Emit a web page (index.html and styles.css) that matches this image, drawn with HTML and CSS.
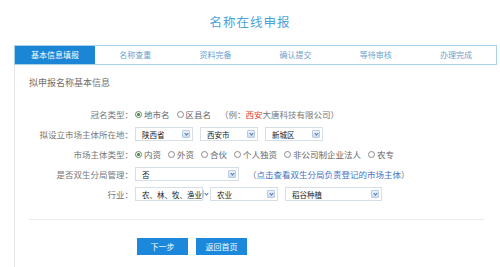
FILE: index.html
```html
<!DOCTYPE html>
<html lang="zh-CN">
<head>
    <meta charset="UTF-8">
    <meta name="viewport" content="width=device-width, initial-scale=1.0">
    <title>名称在线申报</title>
    <link rel="stylesheet" href="styles.css">
</head>
<body>
    <h1 class="page-title">名称在线申报</h1>

    <!-- Steps -->
    <div class="steps">
        <div class="step active">基本信息填报</div>
        <div class="step">名称查重</div>
        <div class="step">资料完备</div>
        <div class="step">确认提交</div>
        <div class="step">等待审核</div>
        <div class="step">办理完成</div>
    </div>

    <div class="panel">
        <h2 class="section-title">拟申报名称基本信息</h2>

        <div class="form">
            <div class="form-row">
                <span class="label">冠名类型：</span>
                <div class="field">
                    <span class="radio checked"></span><span class="opt">地市名</span>
                    <span class="radio"></span><span class="opt">区县名</span>
                    <span class="hint">（例：<em>西安</em>大唐科技有限公司）</span>
                </div>
            </div>

            <div class="form-row">
                <span class="label">拟设立市场主体所在地：</span>
                <div class="field">
                    <span class="select w58">陕西省<i class="arrow"></i></span>
                    <span class="select w58">西安市<i class="arrow"></i></span>
                    <span class="select w58">新城区<i class="arrow"></i></span>
                </div>
            </div>

            <div class="form-row">
                <span class="label">市场主体类型：</span>
                <div class="field">
                    <span class="radio checked"></span><span class="opt">内资</span>
                    <span class="radio"></span><span class="opt">外资</span>
                    <span class="radio"></span><span class="opt">合伙</span>
                    <span class="radio"></span><span class="opt">个人独资</span>
                    <span class="radio"></span><span class="opt">非公司制企业法人</span>
                    <span class="radio"></span><span class="opt">农专</span>
                </div>
            </div>

            <div class="form-row">
                <span class="label">是否双生分局管理：</span>
                <div class="field">
                    <span class="select w104">否<i class="arrow"></i></span>
                    <span class="hint">（<a class="link" href="#">点击查看双生分局负责登记的市场主体</a>）</span>
                </div>
            </div>

            <div class="form-row">
                <span class="label">行业：</span>
                <div class="field">
                    <span class="select w68">农、林、牧、渔业<i class="arrow"></i></span>
                    <span class="select w68">农业<i class="arrow"></i></span>
                    <span class="select w97">稻谷种植<i class="arrow"></i></span>
                </div>
            </div>
        </div>

        <div class="actions">
            <button class="btn">下一步</button>
            <button class="btn">返回首页</button>
        </div>
    </div>
</body>
</html>
```

FILE: styles.css
```css
body {
    margin: 0;
    font-family: "Noto Sans CJK SC", "Noto Sans", sans-serif;
    background-color: #fff;
    color: #555;
    overflow: hidden;
}

.page-title {
    margin: 0;
    height: 45px;
    line-height: 44px;
    text-align: center;
    font-size: 12.5px;
    font-weight: normal;
    color: #4aa3da;
    letter-spacing: 1px;
}

/* Step tabs */
.steps {
    display: flex;
    margin-left: 14px;
    width: 483px;
    height: 20px;
    border: 1px solid #a6d3eb;
    box-sizing: border-box;
}

.step {
    flex: 1;
    text-align: center;
    line-height: 18px;
    font-size: 8px;
    color: #6aa3cf;
}

.step.active {
    background-color: #1b86d6;
    color: #fff;
}

.panel {
    margin-left: 14px;
    border-left: 1px solid #e6e6e6;
    padding: 11px 15px 20px 14px;
}

.section-title {
    margin: 0;
    font-size: 9px;
    line-height: 14px;
    font-weight: normal;
    color: #6f6f6f;
}

.form {
    margin-top: 14px;
    padding-bottom: 15px;
    border-bottom: 1px solid #ededed;
}

.form-row {
    display: flex;
    align-items: center;
    height: 20px;
}

.label {
    width: 104px;
    text-align: right;
    font-size: 8.5px;
    color: #777;
    flex-shrink: 0;
}

.field {
    display: flex;
    align-items: center;
    margin-left: 2px;
    font-size: 8.5px;
    color: #666;
}

.radio {
    width: 5px;
    height: 5px;
    border: 1px solid #8a8a8a;
    border-radius: 50%;
    margin-right: 2px;
    position: relative;
}

.radio.checked {
    border-color: #5a8a5a;
}

.radio.checked::after {
    content: "";
    position: absolute;
    left: 1px;
    top: 1px;
    width: 3px;
    height: 3px;
    border-radius: 50%;
    background-color: #3f7f3f;
}

.opt {
    margin-right: 7px;
}

.hint {
    margin-left: 2px;
    color: #777;
}

.hint em {
    font-style: normal;
    color: #e23b3b;
}

.link {
    color: #4173c4;
    text-decoration: none;
}

/* Fake selects */
.select {
    display: flex;
    align-items: center;
    justify-content: space-between;
    height: 14px;
    padding: 0 2px 0 6px;
    margin-right: 7px;
    border: 1px solid #d6dee8;
    box-sizing: border-box;
    font-size: 7.5px;
    color: #222;
    white-space: nowrap;
}

.w58 { width: 58px; }
.w68 { width: 68px; }
.w97 { width: 97px; }
.w104 { width: 104px; }

.arrow {
    width: 8px;
    height: 8px;
    border: 1px solid #b8cce4;
    border-radius: 1px;
    background: linear-gradient(#eef4fc, #c9daf1);
    box-sizing: border-box;
    position: relative;
}

.arrow::after {
    content: "";
    position: absolute;
    left: 1.5px;
    top: 0.5px;
    width: 2px;
    height: 2px;
    border-right: 1.2px solid #4d6fa8;
    border-bottom: 1.2px solid #4d6fa8;
    transform: rotate(45deg);
}

.actions {
    display: flex;
    gap: 8px;
    margin-top: 18px;
    padding-left: 108px;
}

.btn {
    width: 51px;
    height: 17px;
    padding: 0;
    border: none;
    background-color: #1b88dc;
    color: #fff;
    font-family: inherit;
    font-size: 8px;
    cursor: pointer;
}
```
